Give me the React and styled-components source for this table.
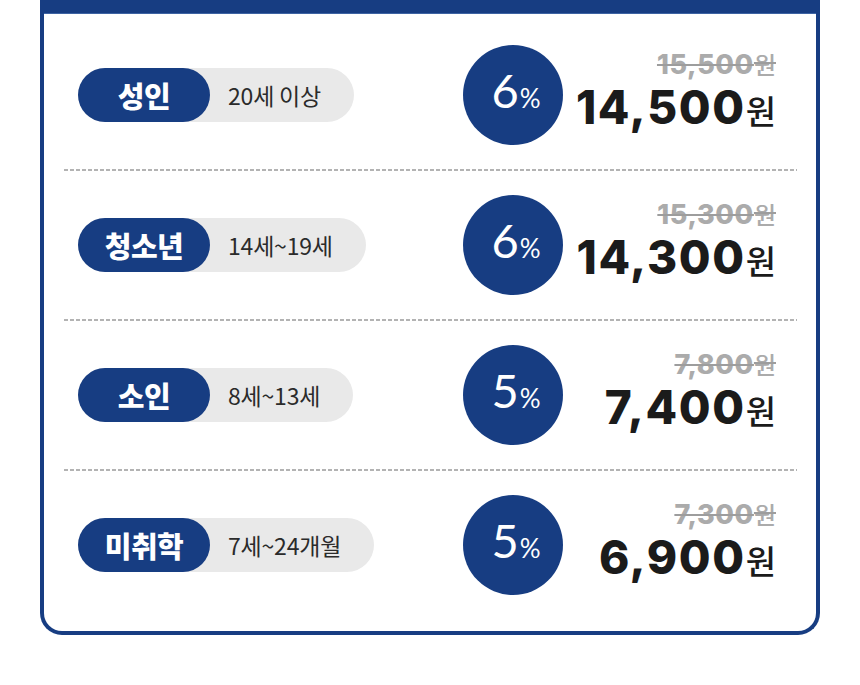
import React from "react";
import styled, { createGlobalStyle } from "styled-components";

const Global = createGlobalStyle`
  html, body { margin: 0; padding: 0; background: #fff; }
  body { font-family: "Noto Sans CJK KR", "Noto Sans", sans-serif; }
`;

const NAVY = "#173d82";

const Page = styled.div`
  width: 860px;
  height: 685px;
  padding: 0 40px;
  box-sizing: border-box;
  background: #fff;
`;

const Card = styled.div`
  box-sizing: border-box;
  width: 780px;
  border: 4px solid ${NAVY};
  border-top: 0;
  border-radius: 0 0 22px 22px;
  background: #fff;
  overflow: hidden;
`;

const HeaderBar = styled.div`
  height: 13px;
  background: ${NAVY};
  border-bottom: 1px solid #3d63a3;
`;

const List = styled.div`
  padding: 7px 19px 12px 20px;
`;

const Divider = styled.div`
  height: 2px;
  background: repeating-linear-gradient(to right, #b3b3b3 0 4px, transparent 4px 6px);
`;

const Row = styled.div`
  height: 148px;
  padding: 0 21px 0 14px;
  display: grid;
  grid-template-columns: 1fr 100px 213px;
  align-items: center;
`;

const Pill = styled.div`
  justify-self: start;
  display: inline-flex;
  align-items: center;
  height: 54px;
  border-radius: 27px;
  background: #e9e9e9;
`;

const Tag = styled.div`
  width: 132px;
  height: 54px;
  border-radius: 27px;
  background: ${NAVY};
  color: #fff;
  display: flex;
  align-items: center;
  justify-content: center;
  font-family: "Noto Sans CJK KR", sans-serif;
  font-weight: 900;
  font-size: 29px;
  letter-spacing: -0.5px;
`;

const Age = styled.span`
  padding: 0 33px 0 18px;
  font-family: "Noto Sans CJK KR", sans-serif;
  font-weight: 400;
  font-size: 23px;
  color: #2b2b2b;
  letter-spacing: -0.2px;
`;

const Badge = styled.div`
  width: 100px;
  height: 100px;
  border-radius: 50%;
  background: ${NAVY};
  color: #fff;
  display: flex;
  align-items: baseline;
  justify-content: center;
  padding-top: 22px;
  box-sizing: border-box;
  padding-left: 6px;
  font-family: "Lato", sans-serif;
  font-weight: 400;
`;

const BadgeNum = styled.span`
  font-size: 47px;
  line-height: 1;
`;

const BadgePct = styled.span`
  font-size: 26px;
  line-height: 1;
  font-weight: 400;
  margin-left: 1px;
`;

const Prices = styled.div`
  display: flex;
  flex-direction: column;
  align-items: flex-end;
  margin-top: -4px;
`;

const OldPrice = styled.div`
  color: #ababab;
  font-family: "Inter", sans-serif;
  font-weight: 800;
  font-size: 27px;
  line-height: 30px;
  letter-spacing: 0.6px;
  text-decoration: line-through;
  text-decoration-thickness: 2px;
  text-decoration-color: #9d9d9d;
`;

const NewPrice = styled.div`
  color: #1b1b1b;
  font-family: "Inter", sans-serif;
  font-weight: 800;
  font-size: 46px;
  line-height: 54px;
  letter-spacing: 1.6px;
`;

const Won = styled.span`
  font-family: "Noto Sans CJK KR", sans-serif;
  font-weight: 500;
  font-size: ${(p) => (p.$big ? "33px" : "24px")};
  letter-spacing: 0;
  margin-left: 0;
`;

const rows = [
  { tag: "성인", age: "20세 이상", pct: "6", old: "15,500", price: "14,500" },
  { tag: "청소년", age: "14세~19세", pct: "6", old: "15,300", price: "14,300" },
  { tag: "소인", age: "8세~13세", pct: "5", old: "7,800", price: "7,400" },
  { tag: "미취학", age: "7세~24개월", pct: "5", old: "7,300", price: "6,900" },
];

export default function App() {
  return (
    <Page>
      <Global />
      <Card>
        <HeaderBar />
        <List>
          {rows.map((r, i) => (
            <React.Fragment key={r.tag}>
              {i > 0 && <Divider />}
              <Row>
                <Pill>
                  <Tag>{r.tag}</Tag>
                  <Age>{r.age}</Age>
                </Pill>
                <Badge>
                  <BadgeNum>{r.pct}</BadgeNum>
                  <BadgePct>%</BadgePct>
                </Badge>
                <Prices>
                  <OldPrice>
                    {r.old}
                    <Won>원</Won>
                  </OldPrice>
                  <NewPrice>
                    {r.price}
                    <Won $big>원</Won>
                  </NewPrice>
                </Prices>
              </Row>
            </React.Fragment>
          ))}
        </List>
      </Card>
    </Page>
  );
}
